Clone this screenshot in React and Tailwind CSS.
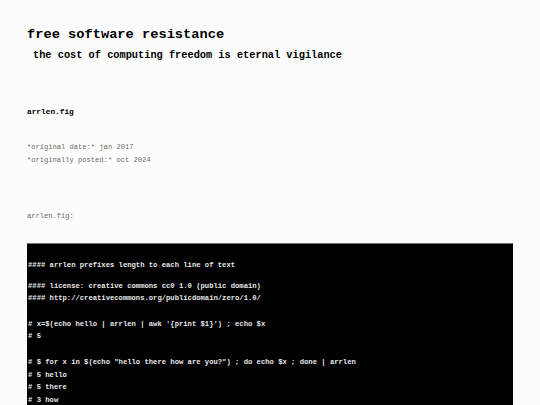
export default function App() {
  const mono = { fontFamily: '"Liberation Mono", "Courier New", monospace' };

  const groups = [
    { mt: "mt-[15px]", lines: ["#### arrlen prefixes length to each line of text"] },
    {
      mt: "mt-[8px]",
      lines: [
        "#### license: creative commons cc0 1.0 (public domain)",
        "#### http://creativecommons.org/publicdomain/zero/1.0/",
      ],
    },
    {
      mt: "mt-[13px]",
      lines: ["# x=$(echo hello | arrlen | awk '{print $1}') ; echo $x", "# 5"],
    },
    {
      mt: "mt-[13px]",
      lines: [
        '# $ for x in $(echo "hello there how are you?") ; do echo $x ; done | arrlen',
        "# 5 hello",
        "# 5 there",
        "# 3 how",
      ],
    },
  ];

  return (
    <div className="h-[405px] overflow-hidden bg-[#fcfcfc] px-[27px] text-black" style={mono}>
      <h1 className="pt-[27px] text-[13.7px] font-bold leading-[16px]">free software resistance</h1>
      <h2 className="mt-[5px] pl-[6px] text-[10.3px] font-bold leading-[14px]">
        the cost of computing freedom is eternal vigilance
      </h2>

      <h3 className="mt-[44px] text-[7.8px] font-bold leading-[12px]">arrlen.fig</h3>

      <div className="mt-[23px] text-[7.1px] leading-[13px] text-[#6b6b6b]">
        <p>*original date:* jan 2017</p>
        <p>*originally posted:* oct 2024</p>
      </div>

      <p className="mt-[43px] text-[7.1px] leading-[13px] text-[#6b6b6b]">arrlen.fig:</p>

      <pre
        className="mt-[20px] w-[486px] border-t border-[#6e6e6e] bg-black px-[1px] pb-10 text-[7.2px] font-bold leading-[12.6px] text-[#e8e8e8]"
        style={mono}
      >
        {groups.map((g, i) => (
          <div key={i} className={g.mt}>
            {g.lines.map((l, j) => (
              <div key={j}>{l}</div>
            ))}
          </div>
        ))}
      </pre>
    </div>
  );
}
